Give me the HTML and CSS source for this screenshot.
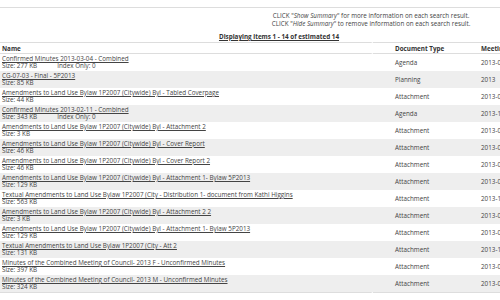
FILE: index.html
```html
<!DOCTYPE html>
<html>

<head>
    <link rel="stylesheet" href="styles.css">
</head>

<body>
    <div class="topbar"></div>

    <div class="help">
        <p>CLICK "<i>Show Summary</i>" for more information on each search result.</p>
        <p>CLICK "<i>Hide Summary</i>" to remove information on each search result.</p>
    </div>

    <div class="paging"><a href="#">Displaying items 1 - 14 of estimated 14</a></div>

    <table class="results">
        <tr>
            <th class="name">Name</th>
            <th class="type">Document Type</th>
            <th class="meet">Meeting Date</th>
        </tr>
        <tr>
            <td class="name"><a href="#">Confirmed Minutes 2013-03-04 - Combined</a>
                <div class="size">Size: 277 KB<span class="idx">Index Only: 0</span></div>
            </td>
            <td class="type">Agenda</td>
            <td class="meet">2013-04-08</td>
        </tr>
        <tr class="alt">
            <td class="name"><a href="#">CG-07-03 - Final - 5P2013</a>
                <div class="size">Size: 85 KB</div>
            </td>
            <td class="type">Planning</td>
            <td class="meet">2013</td>
        </tr>
        <tr>
            <td class="name"><a href="#">Amendments to Land Use Bylaw 1P2007 (Citywide) Byl - Tabled Coverpage</a>
                <div class="size">Size: 44 KB</div>
            </td>
            <td class="type">Attachment</td>
            <td class="meet">2013-03-04</td>
        </tr>
        <tr class="alt">
            <td class="name"><a href="#">Confirmed Minutes 2013-02-11 - Combined</a>
                <div class="size">Size: 343 KB<span class="idx">Index Only: 0</span></div>
            </td>
            <td class="type">Agenda</td>
            <td class="meet">2013-11-04</td>
        </tr>
        <tr>
            <td class="name"><a href="#">Amendments to Land Use Bylaw 1P2007 (Citywide) Byl - Attachment 2</a>
                <div class="size">Size: 3 KB</div>
            </td>
            <td class="type">Attachment</td>
            <td class="meet">2013-03-04</td>
        </tr>
        <tr class="alt">
            <td class="name"><a href="#">Amendments to Land Use Bylaw 1P2007 (Citywide) Byl - Cover Report</a>
                <div class="size">Size: 46 KB</div>
            </td>
            <td class="type">Attachment</td>
            <td class="meet">2013-03-04</td>
        </tr>
        <tr>
            <td class="name"><a href="#">Amendments to Land Use Bylaw 1P2007 (Citywide) Byl - Cover Report 2</a>
                <div class="size">Size: 46 KB</div>
            </td>
            <td class="type">Attachment</td>
            <td class="meet">2013-02-11</td>
        </tr>
        <tr class="alt">
            <td class="name"><a href="#">Amendments to Land Use Bylaw 1P2007 (Citywide) Byl - Attachment 1- Bylaw 5P2013</a>
                <div class="size">Size: 129 KB</div>
            </td>
            <td class="type">Attachment</td>
            <td class="meet">2013-03-04</td>
        </tr>
        <tr>
            <td class="name"><a href="#">Textual Amendments to Land Use Bylaw 1P2007 (City - Distribution 1- document from Kathi Higgins</a>
                <div class="size">Size: 563 KB</div>
            </td>
            <td class="type">Attachment</td>
            <td class="meet">2013-12-02</td>
        </tr>
        <tr class="alt">
            <td class="name"><a href="#">Amendments to Land Use Bylaw 1P2007 (Citywide) Byl - Attachment 2 2</a>
                <div class="size">Size: 3 KB</div>
            </td>
            <td class="type">Attachment</td>
            <td class="meet">2013-02-11</td>
        </tr>
        <tr>
            <td class="name"><a href="#">Amendments to Land Use Bylaw 1P2007 (Citywide) Byl - Attachment 1- Bylaw 5P2013</a>
                <div class="size">Size: 129 KB</div>
            </td>
            <td class="type">Attachment</td>
            <td class="meet">2013-03-04</td>
        </tr>
        <tr class="alt">
            <td class="name"><a href="#">Textual Amendments to Land Use Bylaw 1P2007 (City - Att 2</a>
                <div class="size">Size: 131 KB</div>
            </td>
            <td class="type">Attachment</td>
            <td class="meet">2013-12-02</td>
        </tr>
        <tr>
            <td class="name"><a href="#">Minutes of the Combined Meeting of Council- 2013 F - Unconfirmed Minutes</a>
                <div class="size">Size: 397 KB</div>
            </td>
            <td class="type">Attachment</td>
            <td class="meet">2013-02-11</td>
        </tr>
        <tr class="alt">
            <td class="name"><a href="#">Minutes of the Combined Meeting of Council- 2013 M - Unconfirmed Minutes</a>
                <div class="size">Size: 324 KB</div>
            </td>
            <td class="type">Attachment</td>
            <td class="meet">2013-03-04</td>
        </tr>
        <tr class="foot">
            <td class="name"></td>
            <td class="type"></td>
            <td class="meet"></td>
        </tr>
    </table>
</body>

</html>
```

FILE: styles.css
```css
body {
    margin: 0;
    width: 600px;
    font-family: "Open Sans", "Liberation Sans", sans-serif;
    font-size: 6.3px;
    color: #444;
    background: #fff;
}

html {
    overflow: hidden;
}

a {
    color: #444;
}

.topbar {
    height: 7px;
    border-bottom: 1px solid #ddd;
    width: 500px;
}

.help {
    width: 240px;
    margin-left: 251px;
    text-align: center;
    padding-top: 4px;
}

.help p {
    margin: 0;
    line-height: 8px;
}

.paging {
    width: 442px;
    padding-left: 58px;
    text-align: center;
    line-height: 9px;
    padding-top: 4px;
    font-weight: bold;
}

.paging a {
    color: #333;
}

.results {
    border-collapse: separate;
    border-spacing: 0;
    margin-top: 1px;
    table-layout: fixed;
    width: 600px;
}

.results th {
    text-align: left;
    font-weight: bold;
    color: #333;
    height: 10px;
    padding: 0 2px;
    border-top: 1px solid #ddd;
    border-bottom: 1px solid #ddd;
}

.results th.name,
.foot td.name {
    border-right: 2px solid #fff;
}

.results td {
    height: 17px;
    padding: 0 2px;
    vertical-align: middle;
    white-space: nowrap;
}

.results .name {
    width: 367px;
}

.results .type {
    width: 80px;
    padding-left: 22px;
}

.results .meet {
    padding-left: 4px;
}

.results td.name {
    line-height: 7px;
    height: 16px;
    padding-bottom: 1px;
}

.results tr.alt td {
    background: #eeeeee;
}

.size .idx {
    margin-left: 20px;
}

.results tr.foot td {
    height: 0;
    padding: 0;
    border-top: 1px solid #ddd;
}
```
